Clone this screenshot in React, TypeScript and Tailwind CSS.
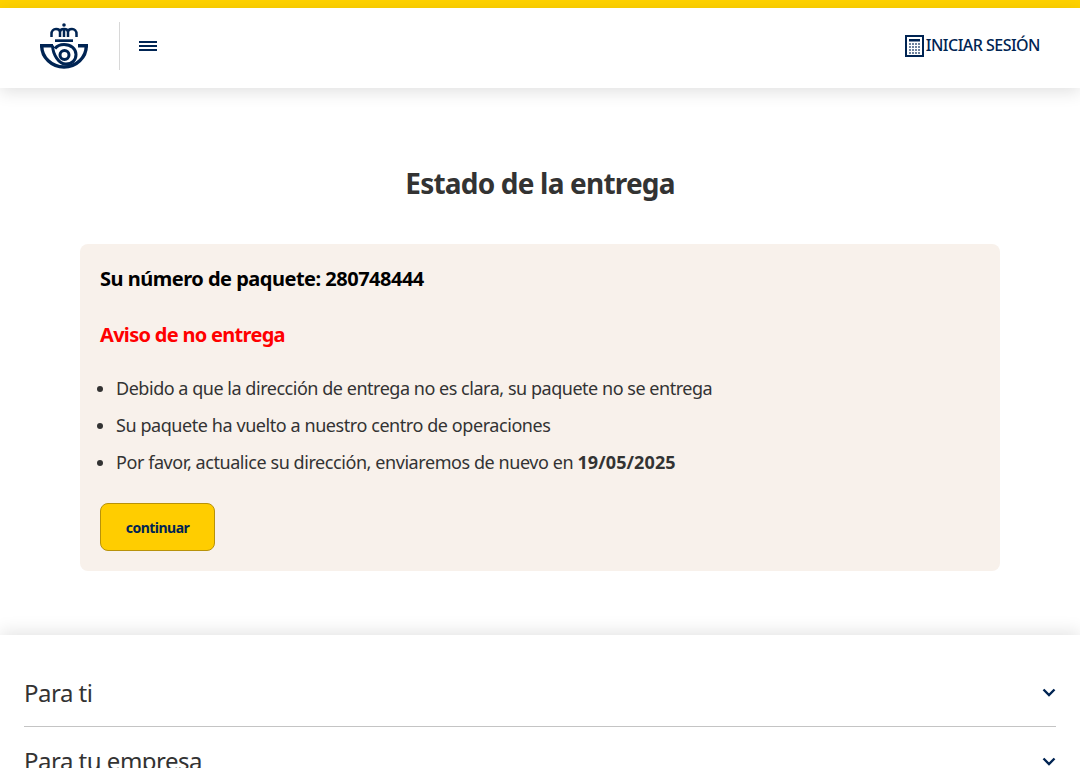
import React from 'react';

const Logo = () => (
  <svg width="48" height="46" viewBox="0 0 48 46" fill="none">
    <circle cx="24" cy="2" r="1.800" fill="#002453" />
    {/* corona */}
    <path d="M11.500 14V11c0-3 2-5 4.500-5s4 1 4 3v5M20 9c0-2 2-3 4-3s4 1 4 3v5M28 14V9c0-2 1.500-3 4-3s4.500 2 4.500 5v3" stroke="#002453" strokeWidth="2.500" />
    <path d="M24 6v8" stroke="#002453" strokeWidth="2.500" />
    <path d="M15 16.300h18v2.700H15z" fill="#002453" />
    {/* trompa */}
    <path d="M0 22.700h13M38 22.700h10" stroke="#002453" strokeWidth="3.400" />
    <path d="M1.700 22.700a22.300 21.300 0 0 0 44.600 0" stroke="#002453" strokeWidth="3.400" />
    <path d="M12.500 22.500c.5 9 6 18.500 13.500 18.500 6 0 10-4 10-9.500 0-5.500-5-10-12-10-4 0-7 1.500-9 4" stroke="#002453" strokeWidth="3" />
    <circle cx="24.500" cy="32" r="4.500" stroke="#002453" strokeWidth="3" />
  </svg>
);

const CalcIcon = () => (
  <svg width="19" height="22" viewBox="0 0 19 22" fill="none">
    <rect x="1" y="1" width="17" height="20" stroke="#002453" strokeWidth="2" />
    <path d="M4 4h11v2.500H4z" fill="#002453" />
    {[9, 12, 15, 18].map(y =>
      [5, 8, 11, 14].map(x => <rect key={`${x}-${y}`} x={x - 0.75} y={y - 0.75} width="1.500" height="1.500" fill="#002453" />)
    )}
  </svg>
);

const FooterRow: React.FC<{ label: string; border?: boolean }> = ({ label, border }) => (
  <div className={`h-[68px] shrink-0 flex items-center justify-between ${border ? 'border-b border-[#c4c4c4]' : ''}`}>
    <span className="text-[24px] leading-[32px] text-[#333333] tracking-[-0.5px]">{label}</span>
    <svg width="14" height="9" viewBox="0 0 14 9" fill="none">
      <path d="M1.500 1.500 7 7l5.500-5.500" stroke="#002453" strokeWidth="2.400" />
    </svg>
  </div>
);

export default function App() {
  return (
    <div className="h-[768px] overflow-hidden bg-white" style={{ fontFamily: '"Noto Sans", sans-serif' }}>
      <div className="h-2 bg-[#ffd200]" />
      <header className="relative z-10 h-20 bg-white flex items-center justify-between px-10 pb-1 shadow-[0_4px_16px_rgba(0,0,0,0.12)]">
        <div className="flex items-center">
          <Logo />
          <div className="w-px h-12 bg-[#d8d8d8] ml-[31px] mr-[19px]" />
          <div className="flex flex-col gap-[2px] w-[18px]">
            <span className="h-[2px] bg-[#002453]" />
            <span className="h-[2px] bg-[#002453]" />
            <span className="h-[2px] bg-[#002453]" />
          </div>
        </div>
        <div className="flex items-center gap-[2px]">
          <CalcIcon />
          <span className="text-[16px] font-medium text-[#002453] tracking-[-0.52px] -translate-y-px">INICIAR SESIÓN</span>
        </div>
      </header>

      <main className="px-20 pt-[71px] pb-16">
        <h1 className="text-center text-[28px] leading-[48px] font-bold text-[#333333] tracking-[-0.8px]">Estado de la entrega</h1>
        <section className="mt-[37px] bg-[#f8f1eb] rounded-lg px-5 pt-[21px] h-[327px]">
          <p className="text-[20px] leading-[28px] font-bold text-black tracking-[-0.5px]">Su número de paquete: 280748444</p>
          <p className="mt-7 text-[20px] leading-[28px] font-bold text-[#ff0000] tracking-[-0.7px]">Aviso de no entrega</p>
          <ul className="mt-[27px] list-disc pl-4 text-[18px] leading-[25px] text-[#333333] tracking-[-0.43px] flex flex-col gap-3">
            <li className="tracking-[-0.47px]">Debido a que la dirección de entrega no es clara, su paquete no se entrega</li>
            <li>Su paquete ha vuelto a nuestro centro de operaciones</li>
            <li>Por favor, actualice su dirección, enviaremos de nuevo en <b className="font-bold tracking-[0.1px]">19/05/2025</b></li>
          </ul>
          <button className="mt-[28px] block w-[115px] h-12 rounded-lg bg-[#ffcd00] border border-[#b8920a] text-[14px] font-bold tracking-[-0.5px] text-[#002453]">continuar</button>
        </section>
      </main>

      <footer className="px-6 pt-6 bg-white shadow-[0_-4px_16px_rgba(0,0,0,0.1)]">
        <FooterRow label="Para ti" border />
        <FooterRow label="Para tu empresa" />
      </footer>
    </div>
  );
}
